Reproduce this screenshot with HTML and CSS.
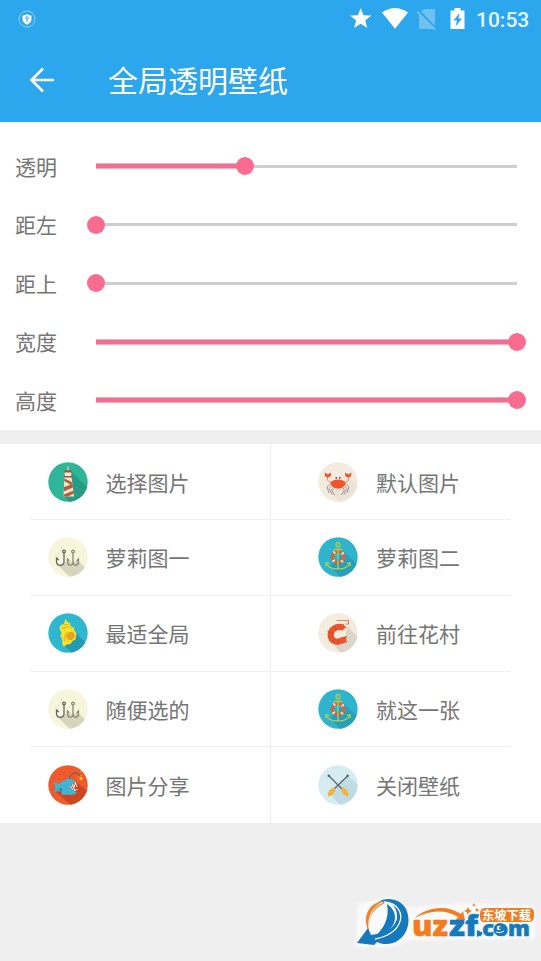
FILE: index.html
```html
<!DOCTYPE html>
<html lang="zh-CN">
<head>
<meta charset="utf-8">
<title>全局透明壁纸</title>
<link rel="stylesheet" href="styles.css">
</head>
<body>
<svg class="defs" width="0" height="0" aria-hidden="true">
  <defs>
    <clipPath id="disc"><circle cx="20" cy="20" r="19.7"/></clipPath>
    <symbol id="lighthouse" viewBox="0 0 40 40">
      <circle cx="20" cy="20" r="19.7" fill="#2fb598"/>
      <path d="M22 8 42 28V44H25L16 34Z" fill="#279b83" clip-path="url(#disc)"/>
      <path d="M16.500 15h7l2.500 19.500h-10.500z" fill="#f6ecd2"/>
      <path d="M16.500 16.500 23.800 20v3.500L16.200 19zM16 25l8.700-3 .3 3.500-9.200 4zM15.800 32.500l9.700-4 .4 3-5.900 3h-4.500z" fill="#b65d3b"/>
      <path d="M16.500 9.500h7l-.5 5h-6z" fill="#f2ead3"/>
      <path d="M16 9.500q4-4 8 0v1h-8zM16 14h8v1.500h-8z" fill="#a94f36"/>
      <path d="M20 4.500v4M18 11v3M22 11v3" stroke="#e5efdc" stroke-width="1"/>
    </symbol>
    <symbol id="crab" viewBox="0 0 40 40">
      <circle cx="20" cy="20" r="19.700" fill="#f3ebdd"/>
      <path d="M30 14 42 26V42H22L12 28Z" fill="#ebe3d6" clip-path="url(#disc)"/>
      <path d="M12.500 22 9 25l2 6M13.500 24l-2.500 2.500 3 6M15 26l-1.500 2 3 5M27.500 22l3.500 3-2 6M26.500 24l2.500 2.500-3 6M25 26l1.500 2-3 5" fill="none" stroke="#99918a" stroke-width=".9"/>
      <path d="M14 21 9.500 18.500 9.500 14M26 21l4.500-2.500V14" fill="none" stroke="#e58a70" stroke-width=".9"/>
      <path d="M7 10.500l2.800 2 3-2q1 4.500-3 5-3.800-.5-2.800-5zM27.300 10.500l3 2 2.800-2q1 4.500-2.800 5-4-.5-3-5z" fill="#ef542c"/>
      <path d="M12.200 21q2-3.500 7.800-3.500t7.800 3.500q-1.500 5.500-7.800 5.500T12.200 21z" fill="#f0552a"/>
      <path d="M18.200 16.800V15M21.800 16.800V15" stroke="#333" stroke-width="1.200"/>
    </symbol>
    <symbol id="hooks" viewBox="0 0 40 40">
      <circle cx="20" cy="20" r="19.700" fill="#f5f6dc"/>
      <path d="M10 28.500 17 25 30 24 42 35V42H24Z" fill="#d8d4bd" clip-path="url(#disc)"/>
      <g fill="none" stroke-width="1.300">
        <path d="M16 16v8.500c0 5.200-7.500 5.200-7.500 0V21l2.200 2" stroke="#656862"/>
        <circle cx="16" cy="14.500" r="1.400" stroke="#656862"/>
        <path d="M25 16v9.500c0 3.500-5.500 3.500-5.500-.5V22l1.800 1.800M25 25.500c0 3.500 5.500 3.500 5.500-.5V22l-1.800 1.800" stroke="#8b8b78"/>
        <circle cx="25" cy="14.500" r="1.400" stroke="#8b8b78"/>
      </g>
    </symbol>
    <symbol id="anchor" viewBox="0 0 40 40">
      <circle cx="20" cy="20" r="19.700" fill="#2eb4cc"/>
      <path d="M26 15 42 30V42H24L12 29Z" fill="#279fb9" clip-path="url(#disc)"/>
      <circle cx="20" cy="20" r="5.700" fill="none" stroke="#db633c" stroke-width="3.200"/>
      <circle cx="20" cy="20" r="5.700" fill="none" stroke="#f7ead8" stroke-width="3.200" stroke-dasharray="1.500 7.453" stroke-dashoffset="-3.700"/>
      <path d="M20 9.500V32M15.500 12.500h9M8 25.500q2 6.500 12 6.500t12-6.500M7.500 29 8 25.500l3.500 1M32.500 29 32 25.500l-3.500 1" fill="none" stroke="#a8cc58" stroke-width="1.300"/>
      <circle cx="20" cy="7.500" r="2" fill="none" stroke="#a8cc58" stroke-width="1.400"/>
    </symbol>
    <symbol id="shell" viewBox="0 0 40 40">
      <circle cx="20" cy="20" r="19.700" fill="#2eb7cf"/>
      <path d="M28 20 42 34V42H26L15 31Z" fill="#259ab3" clip-path="url(#disc)"/>
      <path d="m17.500 6 2 3 2.500 1 .5 3 3 1.500 1 3 2 3-.5 3-.5 3-3 1.500-2 3-3.500.5-3 2-2-2 .5-2.500-.5-3-1.500-3 1-3-1.500-3-.5-3 1.500-2 2.800-1z" fill="#fae12e"/>
      <path d="M17 15q5-3 7 1M13.500 15l5-1M16 12l5-1" stroke="#dbb627" stroke-width="1" fill="none"/>
      <ellipse cx="22.500" cy="23" rx="4.300" ry="3.800" transform="rotate(-40 22.500 23)" fill="#e6a321"/>
      <path d="M17 28q-1.500-5 2.500-9" stroke="#f2bf20" stroke-width="1.700" fill="none"/>
    </symbol>
    <symbol id="shrimp" viewBox="0 0 40 40">
      <circle cx="20" cy="20" r="19.700" fill="#f3ecdf"/>
      <path d="M29 13 42 26V42H25L13 29 27 27Z" fill="#dcd6ca" clip-path="url(#disc)"/>
      <path d="M25.500 14.500C18 12.500 12.500 16.500 12.700 22.500C13 28.500 19 30 25 27" fill="none" stroke="#eb552d" stroke-width="6.200"/>
      <path d="m23 24.500 6-1.500-1 3.500 1 3-5 .5zM24.500 11.400l4 2.600-4.500 3.500z" fill="#eb552d"/>
      <path d="m9.500 18.500 5.500 1.500M9.800 25l5-2M14.500 30l2-4.500M20 31.500l.3-4.500M16.500 12.700l2 4.500" stroke="#cb4324" stroke-width=".8"/>
      <path d="M18.500 7.500h12v3.500h-3" fill="none" stroke="#ee7f60" stroke-width="1.200"/>
    </symbol>
    <symbol id="angler" viewBox="0 0 40 40">
      <circle cx="20" cy="20" r="19.700" fill="#ee5a2c"/>
      <path d="M29 18 42 28V42H25L8 27Z" fill="#cf4520" clip-path="url(#disc)"/>
      <path d="M5 16.500 11 19q3-4 8-4.500l1-2.500 4 2.500 4 2.500-6 5 7 6q-5 3-10 1.500L14 30l-1-3-4-1-3 1.500 1.500-5z" fill="#42b3d0"/>
      <path d="m11 23 3 1-1 3.500z" fill="#3a6a86"/>
      <path d="m22 21 7-4 1 8-3 1.500z" fill="#b24a38"/>
      <path d="m22 21 1.500 2 1.200-3.500 1.300 3 1.500-5 1.500 4.500M24 25l1.500-2.500L27 26l1.500-2 1 1" fill="none" stroke="#fbe9dc" stroke-width="1"/>
      <path d="M21 14c2-7 9-8 11-3" fill="none" stroke="#57606c" stroke-width="1"/>
      <circle cx="33" cy="13.500" r="1.800" fill="#fcbf27"/>
      <path d="M33 10v1M32 6.500h1M29 12h1" stroke="#fcbf27" stroke-width="1"/>
    </symbol>
    <symbol id="oars" viewBox="0 0 40 40">
      <circle cx="20" cy="20" r="19.700" fill="#d6ecf3"/>
      <path d="M30 11 42 22V42H24L12 29Z" fill="#bfdbe3" clip-path="url(#disc)"/>
      <path d="M11 11 25 25M29.500 11 15 25" stroke="#5e6369" stroke-width="1.300"/>
      <circle cx="10.800" cy="10.800" r="1.300" fill="#5e6369"/><circle cx="29.700" cy="10.800" r="1.300" fill="#5e6369"/>
      <path d="m15.500 22 2.500 2.500-3 5-4 2-1.500-1.500 1.500-4.500zM25 22l-2.500 2.500 3 5 4 2 1.500-1.500-1.500-4.500z" fill="#f3b344"/>
    </symbol>
  </defs>
</svg>

<header class="top">
  <div class="status">
    <svg class="shield" viewBox="0 0 18 18"><circle cx="9" cy="9" r="8" fill="none" stroke="#9bd3f5" stroke-width=".9"/><path d="M9 4.300 13.500 5.700V9q0 3.500-4.500 5.700Q4.500 12.500 4.500 9V5.700z" fill="#fff"/><circle cx="9" cy="8" r="1.300" fill="none" stroke="#2ca6ec" stroke-width=".9"/><path d="M9 9.300V12" stroke="#2ca6ec"/></svg>
    <svg class="tray" viewBox="0 0 120 24">
      <path d="m10.700 7.500 2.700 7.200 7.900.4-6.100 4.800 2.100 7.600-6.600-4.300L4 27.500l2.200-7.600L0 15.100l7.900-.4z" transform="translate(0 -6.500)" fill="#fff"/>
      <path d="M32 5.500q13-9 26 0L45 21.800z" fill="#fff"/>
      <path d="M74 2h11v20H69V7z" fill="#70c0f2"/>
      <path d="m67.500 3 19 19.500" stroke="#2ca6ec" stroke-width="3"/><path d="m67 4.500 18.500 18.500" stroke="#86c9f3" stroke-width="1.300"/>
      <path d="M104.500 1h6v2.500h4V22h-14V3.500h4z" fill="#fff"/><path d="m109.500 6-6 7.500h3.500l-1.500 6 6.500-8h-3.500z" fill="#2ca6ec"/>
    </svg>
    <span class="clock">10:53</span>
  </div>
  <div class="bar">
    <svg class="back" viewBox="0 0 26 26"><path d="M25 13H3M14 1.500 2.500 13 14 24.500" fill="none" stroke="#fff" stroke-width="2.700"/></svg>
    <h1>全局透明壁纸</h1>
  </div>
</header>

<section class="sliders">
  <div class="row"><span class="label">透明</span><div class="track part"><i class="fill"></i><i class="knob"></i><i class="rest"></i></div></div>
  <div class="row"><span class="label">距左</span><div class="track"><i class="knob"></i><i class="rest"></i></div></div>
  <div class="row"><span class="label">距上</span><div class="track"><i class="knob"></i><i class="rest"></i></div></div>
  <div class="row"><span class="label">宽度</span><div class="track full"><i class="fill"></i><i class="knob"></i></div></div>
  <div class="row"><span class="label">高度</span><div class="track full"><i class="fill"></i><i class="knob"></i></div></div>
</section>

<main class="menu">
  <div class="cell"><svg><use href="#lighthouse"/></svg><span>选择图片</span></div>
  <div class="cell"><svg><use href="#crab"/></svg><span>默认图片</span></div>
  <div class="cell"><svg><use href="#hooks"/></svg><span>萝莉图一</span></div>
  <div class="cell"><svg><use href="#anchor"/></svg><span>萝莉图二</span></div>
  <div class="cell"><svg><use href="#shell"/></svg><span>最适全局</span></div>
  <div class="cell"><svg><use href="#shrimp"/></svg><span>前往花村</span></div>
  <div class="cell"><svg><use href="#hooks"/></svg><span>随便选的</span></div>
  <div class="cell"><svg><use href="#anchor"/></svg><span>就这一张</span></div>
  <div class="cell"><svg><use href="#angler"/></svg><span>图片分享</span></div>
  <div class="cell"><svg><use href="#oars"/></svg><span>关闭壁纸</span></div>
</main>

<svg class="watermark" viewBox="0 0 201 71">
  <defs><filter id="glow" x="-10%" y="-20%" width="120%" height="140%"><feGaussianBlur stdDeviation="1.500"/></filter></defs>
  <path d="M18 14 50 7 66 18 120 13 195 16V49L70 50 50 57H16Z" fill="#fafafa" filter="url(#glow)"/>
  <path d="M50 11C34 9 25 20 26 32q0 5 3 9-1-15 7-22 5-5 14-8z" fill="#f28430"/>
  <path d="M43 12c-12 6-15 16-14 27" fill="none" stroke="#fff" stroke-width="1"/>
  <path d="M38 12c9-6 23-3 28 7 6 13 1 29-13 34-6 2-12 1-16-1l-3 3-17-2 11-15 3 7c17-2 27-10 26-20-.5-9-8-15-19-13z" fill="#1579bd"/>
  <path d="M47 14c8 5 10 14 6 21-4 6-12 11-19 12 9-7 16-19 13-33z" fill="#1579bd"/>
  <path d="M44 12c14 1 20 12 15 22-4 8-14 13-24 15" fill="none" stroke="#fff" stroke-width="1.300"/>
  <path d="M75 28C86 17 107 14 121 24l2-3 2 9-10 1 3-4C105 19 89 20 75 28z" fill="#f47c20"/>
  <g class="logo-word">
    <text x="72" y="46" textLength="36" lengthAdjust="spacingAndGlyphs" font-size="28" fill="#f47c20" stroke="#f47c20">uz</text>
    <text x="109" y="46" textLength="29" lengthAdjust="spacingAndGlyphs" font-size="28" fill="#1579bd" stroke="#1579bd">zf</text>
    <text x="136" y="46" textLength="54" lengthAdjust="spacingAndGlyphs" font-size="21" fill="#1579bd" stroke="#1579bd">.com</text>
  </g>
  <path d="m137 40 6 3-6 4z" fill="#1579bd"/>
  <circle cx="160" cy="39.500" r="6.500" fill="#1579bd"/><circle cx="159" cy="38" r="2.200" fill="#fff"/><circle cx="160" cy="38" r="1.200" fill="#1579bd"/><path d="M156 42q4 2 8-1" fill="none" stroke="#fff"/>
  <path d="m128 17 1.300 2.700 2.700 1.300-2.700 1.300L128 25l-1.300-2.700L124 21l2.700-1.300zM134 13l.6 1.400 1.400.6-1.400.6-.6 1.400-.6-1.400-1.400-.6 1.400-.6zM137 18l.8 1.200 1.200.8-1.200.8-.8 1.200-.8-1.200-1.200-.8 1.200-.8z" fill="#f47c20"/>
  <path d="M145 18h44q5 0 5 5v3q0 6-6 6h-44q-4 0-4-5v-3q0-6 5-6z" fill="#f47c20"/>
  <text class="logo-tag" x="142" y="29.500" textLength="49" lengthAdjust="spacingAndGlyphs">东坡下载</text>
</svg>
</body>
</html>
```
FILE: styles.css
```css
* { box-sizing: border-box; }
body {
  margin: 0;
  min-height: 961px;
  background: #efefef;
  color: #757575;
  font-family: Roboto, "Noto Sans CJK SC", sans-serif;
  font-size: 21px;
  overflow: hidden;
}
.defs { position: absolute; }
svg { display: block; flex: none; }

.top { height: 121.75px; background: #2ca6ec; color: #fff; }
.status { display: flex; align-items: center; height: 38px; padding: 0 12px 0 18px; }
.shield { width: 18px; height: 18px; }
.tray { width: 120px; height: 24px; margin-left: auto; margin-right: 6px; }
.clock { width: 53px; font-size: 21px; font-weight: 500; line-height: 38px; color: #e6f6ff; white-space: nowrap; margin-top: 2px; }
.bar { display: flex; align-items: center; height: 84px; padding-left: 29px; }
.back { width: 26px; height: 26px; }
h1 { margin: 0 0 0 53px; padding-top: 3px; font-size: 30px; font-weight: 400; line-height: 44px; }

.sliders { height: 307.75px; padding-top: 15px; background: #fff; }
.row { display: flex; align-items: center; height: 58.5px; padding-left: 15px; }
.label { width: 72px; line-height: 30px; padding-top: 3px; }
.track { display: flex; align-items: center; width: 439px; height: 18px; }
.fill { height: 6px; margin-left: 9px; margin-right: -1px; background: #ee6f90; border: solid #f9aabd; border-width: 1px 0; }
.part .fill { width: 141px; }
.full .fill { width: 413px; }
.knob { width: 18px; height: 18px; border-radius: 50%; background: #fa6b90; }
.rest { flex: 1; height: 3px; margin-right: 9px; background: #cecece; }

.menu {
  display: grid;
  grid-template-columns: 271px 270px;
  grid-auto-rows: 75.8px;
  margin-top: 14.75px;
  height: 379px;
  background: #fff;
}
.cell {
  display: flex;
  align-items: center;
  gap: 18px;
  padding-left: 18px;
  border-bottom: 1px solid #f0f0f0;
}
.cell:nth-child(odd) { margin-left: 30px; padding-left: 17.5px; border-right: 1px solid #f0f0f0; }
.cell:nth-child(even) { margin-right: 30px; padding-left: 47px; }
.cell:nth-last-child(-n+2) { border-bottom: 0; }
.cell svg { width: 40px; height: 40px; }
.cell span { line-height: 30px; padding-top: 4px; }

.watermark { position: absolute; left: 340px; top: 890px; width: 201px; height: 71px; }
.logo-word { font-family: "Open Sans", sans-serif; font-weight: 800; stroke-width: .5px; }
.logo-tag { font-family: "Noto Sans CJK SC", sans-serif; font-size: 12px; font-weight: 700; fill: #fff; }
```
